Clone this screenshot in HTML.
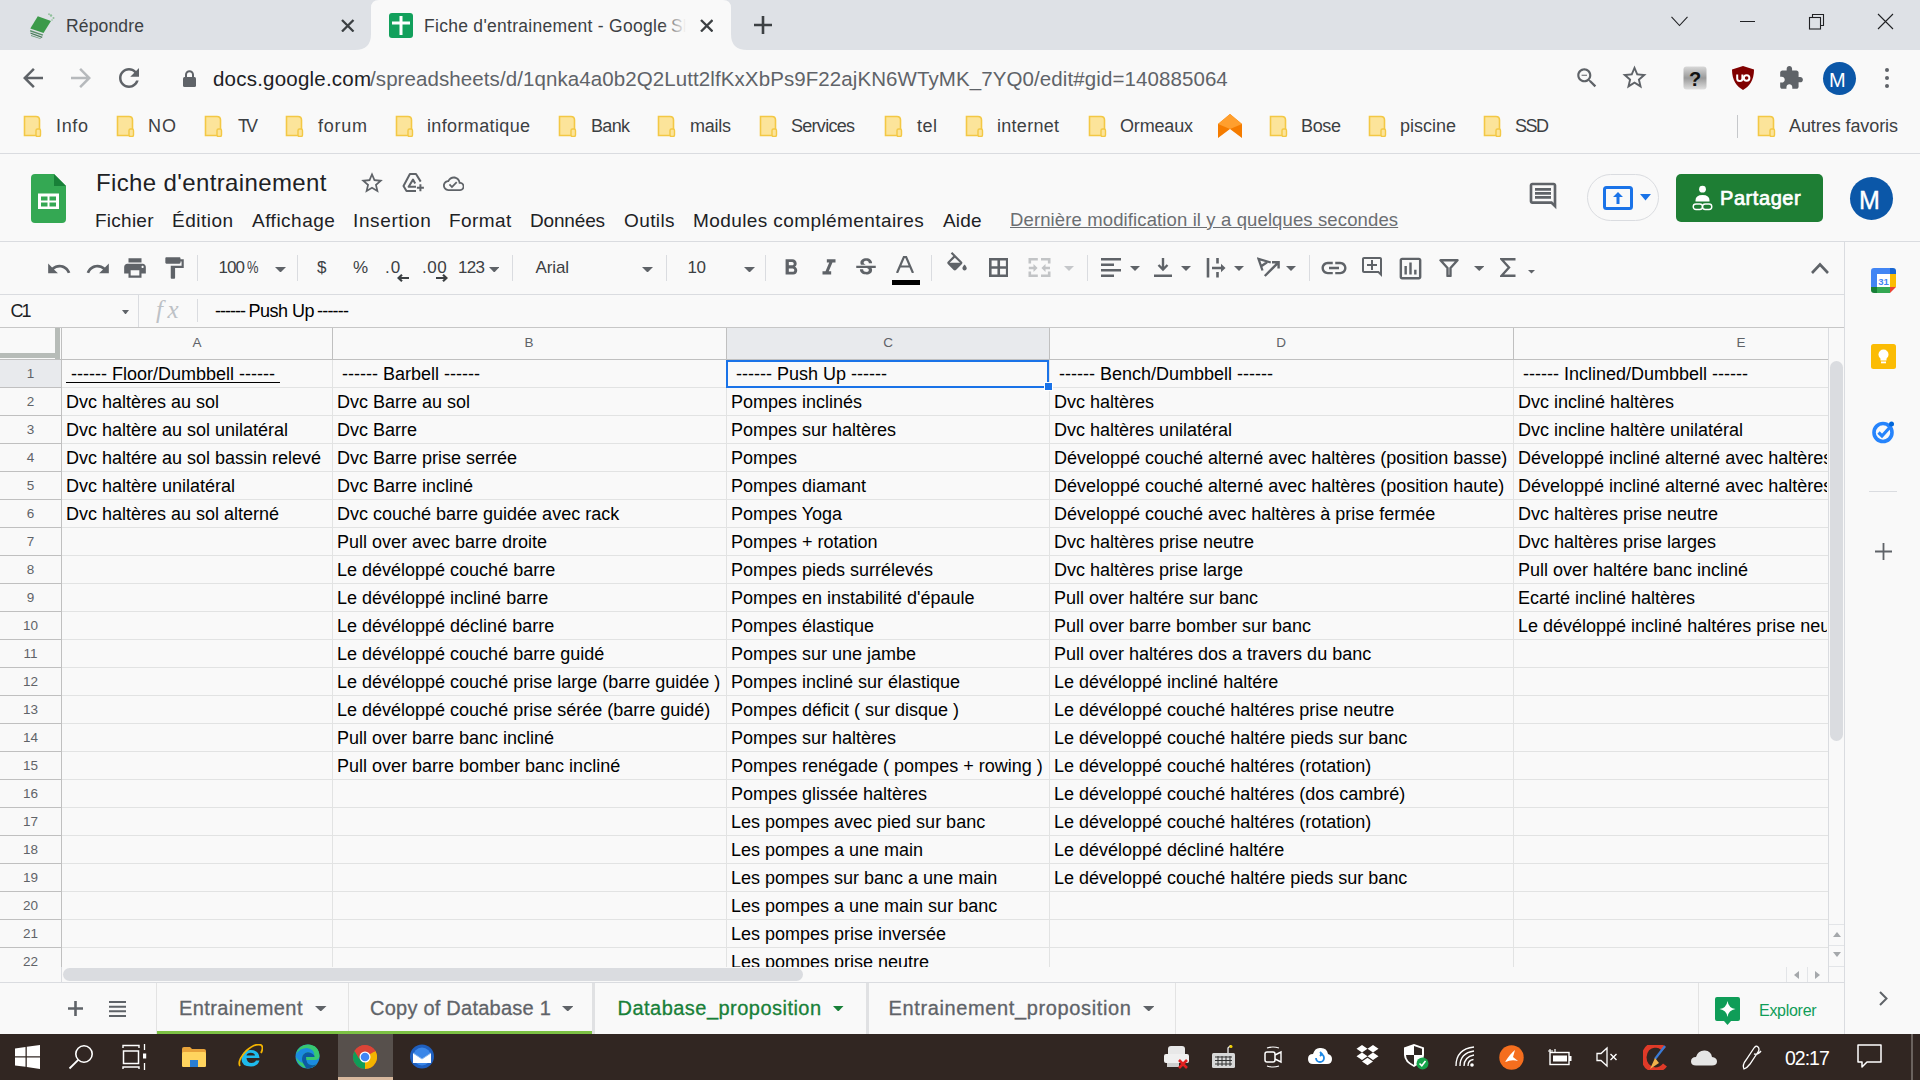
<!DOCTYPE html>
<html><head><meta charset="utf-8"><style>
html,body{margin:0;padding:0}
body{width:1920px;height:1080px;overflow:hidden;position:relative;background:#f9f9f9;font-family:'Liberation Sans',sans-serif}
.t{position:absolute;line-height:0;white-space:pre}
svg{display:block}
</style></head><body>
<div style="position:absolute;left:0px;top:0px;width:1920px;height:50px;background:#dee1e6"></div><svg style="position:absolute;left:355px;top:0" width="392" height="50" viewBox="0 0 392 50"><path d="M0 50 Q16 50 16 34 L16 8 Q16 0 24 0 L368 0 Q376 0 376 8 L376 34 Q376 50 392 50 Z" fill="#f9f9f9"/></svg><svg style="position:absolute;left:29px;top:13px;" width="26" height="26" viewBox="0 0 26 26"><path d="M8.8 3.3 L22 8 L14.5 20 L1.3 15.5 Z" fill="#3c9a4a"/><path d="M1.3 17 L14.2 21.5 L13.6 22.8 L1 18.4 Z" fill="#5c8f6c"/><path d="M1.5 19.5 L13.5 23.8 L13 25 L1.5 20.8 Z" fill="#4a7a5a"/><path d="M2 22 L12 25.5 L11.5 26 L2 23 Z" fill="#6a9a7a"/><circle cx="22" cy="2.5" r="1.2" fill="#8fbf9a"/><circle cx="24.5" cy="5" r="1" fill="#8fbf9a"/><circle cx="20" cy="1.2" r="0.9" fill="#8fbf9a"/><circle cx="23" cy="7" r="0.8" fill="#8fbf9a"/></svg><div class=t style="left:66.00px;top:25.94px;font-family:'Liberation Sans',sans-serif;font-size:17.5px;font-weight:400;color:#3c4043;letter-spacing:0.143px;">Répondre</div><svg style="position:absolute;left:341.25px;top:18.75px" width="13.5" height="13.5" viewBox="-6.75 -6.75 13.5 13.5"><path d="M-5.75 -5.75 L5.75 5.75 M5.75 -5.75 L-5.75 5.75" stroke="#3c4043" stroke-width="2.3" stroke-linecap="butt"/></svg><svg style="position:absolute;left:389px;top:13px;" width="24" height="25" viewBox="0 0 24 25"><rect x="0" y="0" width="24" height="25" rx="3" fill="#12a05c"/><rect x="3" y="8.5" width="18" height="3" fill="#fff"/><rect x="10.5" y="3" width="3" height="19" fill="#fff"/></svg><div class=t style="left:424.00px;top:25.94px;font-family:'Liberation Sans',sans-serif;font-size:17.5px;font-weight:400;color:#3c4043;letter-spacing:0.286px;">Fiche d'entrainement - Google</div><div class=t style="left:671.00px;top:25.94px;font-family:'Liberation Sans',sans-serif;font-size:17.5px;font-weight:400;color:#3c4043;letter-spacing:0px;">Sh</div><div style="position:absolute;left:662px;top:8px;width:36px;height:34px;background:linear-gradient(90deg,rgba(249,249,249,0),#f9f9f9 24px)"></div><svg style="position:absolute;left:699.75px;top:18.75px" width="13.5" height="13.5" viewBox="-6.75 -6.75 13.5 13.5"><path d="M-5.75 -5.75 L5.75 5.75 M5.75 -5.75 L-5.75 5.75" stroke="#3c4043" stroke-width="2.3" stroke-linecap="butt"/></svg><svg style="position:absolute;left:754px;top:16px;" width="18" height="18" viewBox="0 0 18 18"><path d="M9 0 V18 M0 9 H18" stroke="#3c4043" stroke-width="2.6"/></svg><svg style="position:absolute;left:1671px;top:16px;" width="17" height="11" viewBox="0 0 17 11"><path d="M0.5 0.8 L8.5 9.5 L16.5 0.8" stroke="#202124" stroke-width="1.1" fill="none"/></svg><div style="position:absolute;left:1740px;top:21px;width:15px;height:1.2px;background:#202124"></div><svg style="position:absolute;left:1807px;top:12px;" width="19" height="19" viewBox="0 0 19 19"><rect x="2.5" y="5.5" width="11" height="11.5" fill="none" stroke="#202124" stroke-width="1.1"/><path d="M5.5 5.5 V2.5 H16.5 V13.5 H13.5" fill="none" stroke="#202124" stroke-width="1.1"/></svg><svg style="position:absolute;left:1877px;top:13px;" width="17" height="17" viewBox="0 0 17 17"><path d="M1 1 L16 16 M16 1 L1 16" stroke="#202124" stroke-width="1.1"/></svg><svg style="position:absolute;left:18px;top:63px" width="30" height="30" viewBox="0 0 24 24"><path d="M20 11H7.83l5.59-5.59L12 4l-8 8 8 8 1.41-1.41L7.83 13H20v-2z" fill="#5f6368"/></svg><svg style="position:absolute;left:66px;top:63px" width="30" height="30" viewBox="0 0 24 24"><path d="M12 4l-1.41 1.41L16.17 11H4v2h12.17l-5.58 5.59L12 20l8-8z" fill="#b6b9bc"/></svg><svg style="position:absolute;left:114px;top:63px" width="30" height="30" viewBox="0 0 24 24"><path d="M17.65 6.35C16.2 4.9 14.21 4 12 4c-4.42 0-7.99 3.58-7.99 8s3.57 8 7.99 8c3.73 0 6.84-2.55 7.73-6h-2.08c-.82 2.33-3.04 4-5.65 4-3.31 0-6-2.69-6-6s2.69-6 6-6c1.66 0 3.14.69 4.22 1.78L13 11h7V4l-2.35 2.35z" fill="#5f6368"/></svg><svg style="position:absolute;left:183px;top:70px;" width="13" height="17" viewBox="0 0 13 17"><path d="M3 7 V4.8 A3.5 3.5 0 0 1 10 4.8 V7" stroke="#5f6368" stroke-width="2" fill="none"/><rect x="0" y="7" width="13" height="10" rx="1.5" fill="#5f6368"/></svg><div class=t style="left:213.00px;top:78.90px;font-family:'Liberation Sans',sans-serif;font-size:20.5px;font-weight:400;color:#202124;letter-spacing:0.214px;">docs.google.com</div><div class=t style="left:370.00px;top:78.90px;font-family:'Liberation Sans',sans-serif;font-size:20.5px;font-weight:400;color:#5f6368;letter-spacing:0.09px;">/spreadsheets/d/1qnka4a0b2Q2Lutt2lfKxXbPs9F22ajKN6WTyMK_7YQ0/edit#gid=140885064</div><svg style="position:absolute;left:1574px;top:65px" width="26" height="26" viewBox="0 0 24 24"><path d="M15.5 14h-.79l-.28-.27C15.41 12.59 16 11.11 16 9.5 16 5.91 13.09 3 9.5 3S3 5.91 3 9.5 5.91 16 9.5 16c1.61 0 3.09-.59 4.23-1.57l.27.28v.79l5 4.99L20.49 19l-4.99-5zm-6 0C7.01 14 5 11.99 5 9.5S7.01 5 9.5 5 14 7.01 14 9.5 11.99 14 9.5 14zM7 9h5v1H7z" fill="#5f6368"/></svg><svg style="position:absolute;left:1620px;top:63px" width="29" height="29" viewBox="0 0 24 24"><path d="M22 9.24l-7.19-.62L12 2 9.19 8.63 2 9.24l5.46 4.73L5.82 21 12 17.27 18.18 21l-1.63-7.03L22 9.24zM12 15.4l-3.76 2.27 1-4.28-3.32-2.88 4.38-.38L12 6.1l1.71 4.04 4.38.38-3.32 2.88 1 4.28L12 15.4z" fill="#5f6368"/></svg><svg style="position:absolute;left:1683px;top:66px;" width="24" height="24" viewBox="0 0 24 24"><defs><linearGradient id="qg" x1="0" y1="0" x2="0" y2="1"><stop offset="0" stop-color="#d8d8d8"/><stop offset="0.5" stop-color="#9a9a9a"/><stop offset="1" stop-color="#e0e0e0"/></linearGradient></defs><rect x="0.5" y="0.5" width="23" height="23" rx="3" fill="url(#qg)"/><text x="12" y="19.5" text-anchor="middle" font-family="Liberation Sans" font-weight="bold" font-size="20" fill="#111">?</text></svg><svg style="position:absolute;left:1732px;top:66px;" width="22" height="24" viewBox="0 0 22 24"><path d="M11 0 L22 3.5 C22 15 17 20.5 11 24 C5 20.5 0 15 0 3.5 Z" fill="#800000"/><path d="M5.2 8.5 V12.5 A2.6 2.6 0 0 0 10.4 12.5 V8.5" stroke="#fff" stroke-width="2" fill="none"/><circle cx="14.6" cy="12" r="2.8" stroke="#fff" stroke-width="2" fill="none"/></svg><svg style="position:absolute;left:1778px;top:65px" width="26" height="26" viewBox="0 0 24 24"><path d="M20.5 11H19V7c0-1.1-.9-2-2-2h-4V3.5C13 2.12 11.88 1 10.5 1S8 2.12 8 3.5V5H4c-1.1 0-1.99.9-1.99 2v3.8H3.5c1.49 0 2.7 1.21 2.7 2.7s-1.21 2.7-2.7 2.7H2V20c0 1.1.9 2 2 2h3.8v-1.5c0-1.49 1.21-2.7 2.7-2.7 1.49 0 2.7 1.21 2.7 2.7V22H17c1.1 0 2-.9 2-2v-4h1.5c1.38 0 2.5-1.12 2.5-2.5S21.88 11 20.5 11z" fill="#5f6368"/></svg><div style="position:absolute;left:1823px;top:62px;width:33px;height:33px;background:#0b57a8;border-radius:50%"></div><div class=t style="left:1829.00px;top:79.57px;font-family:'Liberation Sans',sans-serif;font-size:20px;font-weight:400;color:#ffffff;letter-spacing:0px;">M</div><div style="position:absolute;left:1885px;top:68px;width:4px;height:4px;background:#5f6368;border-radius:50%"></div><div style="position:absolute;left:1885px;top:76px;width:4px;height:4px;background:#5f6368;border-radius:50%"></div><div style="position:absolute;left:1885px;top:84px;width:4px;height:4px;background:#5f6368;border-radius:50%"></div><svg style="position:absolute;left:23px;top:115px;" width="19" height="22" viewBox="0 0 19 22"><path d="M1.5 1.5 H13 Q16.5 1.5 16.5 5 V20.5 H1.5 Z" fill="#fce49a" stroke="#f3c845" stroke-width="1.6"/><rect x="13" y="14" width="4.5" height="7.5" rx="1.5" fill="#fce49a" stroke="#f3c845" stroke-width="1.4"/></svg><div class=t style="left:56.00px;top:126.26px;font-family:'Liberation Sans',sans-serif;font-size:18px;font-weight:400;color:#3c4043;letter-spacing:0.667px;">Info</div><svg style="position:absolute;left:116px;top:115px;" width="19" height="22" viewBox="0 0 19 22"><path d="M1.5 1.5 H13 Q16.5 1.5 16.5 5 V20.5 H1.5 Z" fill="#fce49a" stroke="#f3c845" stroke-width="1.6"/><rect x="13" y="14" width="4.5" height="7.5" rx="1.5" fill="#fce49a" stroke="#f3c845" stroke-width="1.4"/></svg><div class=t style="left:148.00px;top:126.26px;font-family:'Liberation Sans',sans-serif;font-size:18px;font-weight:400;color:#3c4043;letter-spacing:1.0px;">NO</div><svg style="position:absolute;left:204px;top:115px;" width="19" height="22" viewBox="0 0 19 22"><path d="M1.5 1.5 H13 Q16.5 1.5 16.5 5 V20.5 H1.5 Z" fill="#fce49a" stroke="#f3c845" stroke-width="1.6"/><rect x="13" y="14" width="4.5" height="7.5" rx="1.5" fill="#fce49a" stroke="#f3c845" stroke-width="1.4"/></svg><div class=t style="left:238.00px;top:126.26px;font-family:'Liberation Sans',sans-serif;font-size:18px;font-weight:400;color:#3c4043;letter-spacing:-3.0px;">TV</div><svg style="position:absolute;left:285px;top:115px;" width="19" height="22" viewBox="0 0 19 22"><path d="M1.5 1.5 H13 Q16.5 1.5 16.5 5 V20.5 H1.5 Z" fill="#fce49a" stroke="#f3c845" stroke-width="1.6"/><rect x="13" y="14" width="4.5" height="7.5" rx="1.5" fill="#fce49a" stroke="#f3c845" stroke-width="1.4"/></svg><div class=t style="left:318.00px;top:126.26px;font-family:'Liberation Sans',sans-serif;font-size:18px;font-weight:400;color:#3c4043;letter-spacing:0.75px;">forum</div><svg style="position:absolute;left:395px;top:115px;" width="19" height="22" viewBox="0 0 19 22"><path d="M1.5 1.5 H13 Q16.5 1.5 16.5 5 V20.5 H1.5 Z" fill="#fce49a" stroke="#f3c845" stroke-width="1.6"/><rect x="13" y="14" width="4.5" height="7.5" rx="1.5" fill="#fce49a" stroke="#f3c845" stroke-width="1.4"/></svg><div class=t style="left:427.00px;top:126.26px;font-family:'Liberation Sans',sans-serif;font-size:18px;font-weight:400;color:#3c4043;letter-spacing:0.364px;">informatique</div><svg style="position:absolute;left:558px;top:115px;" width="19" height="22" viewBox="0 0 19 22"><path d="M1.5 1.5 H13 Q16.5 1.5 16.5 5 V20.5 H1.5 Z" fill="#fce49a" stroke="#f3c845" stroke-width="1.6"/><rect x="13" y="14" width="4.5" height="7.5" rx="1.5" fill="#fce49a" stroke="#f3c845" stroke-width="1.4"/></svg><div class=t style="left:591.00px;top:126.26px;font-family:'Liberation Sans',sans-serif;font-size:18px;font-weight:400;color:#3c4043;letter-spacing:-0.667px;">Bank</div><svg style="position:absolute;left:657px;top:115px;" width="19" height="22" viewBox="0 0 19 22"><path d="M1.5 1.5 H13 Q16.5 1.5 16.5 5 V20.5 H1.5 Z" fill="#fce49a" stroke="#f3c845" stroke-width="1.6"/><rect x="13" y="14" width="4.5" height="7.5" rx="1.5" fill="#fce49a" stroke="#f3c845" stroke-width="1.4"/></svg><div class=t style="left:690.00px;top:126.26px;font-family:'Liberation Sans',sans-serif;font-size:18px;font-weight:400;color:#3c4043;letter-spacing:-0.25px;">mails</div><svg style="position:absolute;left:759px;top:115px;" width="19" height="22" viewBox="0 0 19 22"><path d="M1.5 1.5 H13 Q16.5 1.5 16.5 5 V20.5 H1.5 Z" fill="#fce49a" stroke="#f3c845" stroke-width="1.6"/><rect x="13" y="14" width="4.5" height="7.5" rx="1.5" fill="#fce49a" stroke="#f3c845" stroke-width="1.4"/></svg><div class=t style="left:791.00px;top:126.26px;font-family:'Liberation Sans',sans-serif;font-size:18px;font-weight:400;color:#3c4043;letter-spacing:-0.714px;">Services</div><svg style="position:absolute;left:884px;top:115px;" width="19" height="22" viewBox="0 0 19 22"><path d="M1.5 1.5 H13 Q16.5 1.5 16.5 5 V20.5 H1.5 Z" fill="#fce49a" stroke="#f3c845" stroke-width="1.6"/><rect x="13" y="14" width="4.5" height="7.5" rx="1.5" fill="#fce49a" stroke="#f3c845" stroke-width="1.4"/></svg><div class=t style="left:917.00px;top:126.26px;font-family:'Liberation Sans',sans-serif;font-size:18px;font-weight:400;color:#3c4043;letter-spacing:0.5px;">tel</div><svg style="position:absolute;left:965px;top:115px;" width="19" height="22" viewBox="0 0 19 22"><path d="M1.5 1.5 H13 Q16.5 1.5 16.5 5 V20.5 H1.5 Z" fill="#fce49a" stroke="#f3c845" stroke-width="1.6"/><rect x="13" y="14" width="4.5" height="7.5" rx="1.5" fill="#fce49a" stroke="#f3c845" stroke-width="1.4"/></svg><div class=t style="left:997.00px;top:126.26px;font-family:'Liberation Sans',sans-serif;font-size:18px;font-weight:400;color:#3c4043;letter-spacing:0.286px;">internet</div><svg style="position:absolute;left:1088px;top:115px;" width="19" height="22" viewBox="0 0 19 22"><path d="M1.5 1.5 H13 Q16.5 1.5 16.5 5 V20.5 H1.5 Z" fill="#fce49a" stroke="#f3c845" stroke-width="1.6"/><rect x="13" y="14" width="4.5" height="7.5" rx="1.5" fill="#fce49a" stroke="#f3c845" stroke-width="1.4"/></svg><div class=t style="left:1120.00px;top:126.26px;font-family:'Liberation Sans',sans-serif;font-size:18px;font-weight:400;color:#3c4043;letter-spacing:-0.167px;">Ormeaux</div><svg style="position:absolute;left:1269px;top:115px;" width="19" height="22" viewBox="0 0 19 22"><path d="M1.5 1.5 H13 Q16.5 1.5 16.5 5 V20.5 H1.5 Z" fill="#fce49a" stroke="#f3c845" stroke-width="1.6"/><rect x="13" y="14" width="4.5" height="7.5" rx="1.5" fill="#fce49a" stroke="#f3c845" stroke-width="1.4"/></svg><div class=t style="left:1301.00px;top:126.26px;font-family:'Liberation Sans',sans-serif;font-size:18px;font-weight:400;color:#3c4043;letter-spacing:-0.333px;">Bose</div><svg style="position:absolute;left:1368px;top:115px;" width="19" height="22" viewBox="0 0 19 22"><path d="M1.5 1.5 H13 Q16.5 1.5 16.5 5 V20.5 H1.5 Z" fill="#fce49a" stroke="#f3c845" stroke-width="1.6"/><rect x="13" y="14" width="4.5" height="7.5" rx="1.5" fill="#fce49a" stroke="#f3c845" stroke-width="1.4"/></svg><div class=t style="left:1400.00px;top:126.26px;font-family:'Liberation Sans',sans-serif;font-size:18px;font-weight:400;color:#3c4043;letter-spacing:0.0px;">piscine</div><svg style="position:absolute;left:1483px;top:115px;" width="19" height="22" viewBox="0 0 19 22"><path d="M1.5 1.5 H13 Q16.5 1.5 16.5 5 V20.5 H1.5 Z" fill="#fce49a" stroke="#f3c845" stroke-width="1.6"/><rect x="13" y="14" width="4.5" height="7.5" rx="1.5" fill="#fce49a" stroke="#f3c845" stroke-width="1.4"/></svg><div class=t style="left:1515.00px;top:126.26px;font-family:'Liberation Sans',sans-serif;font-size:18px;font-weight:400;color:#3c4043;letter-spacing:-1.5px;">SSD</div><svg style="position:absolute;left:1757px;top:115px;" width="19" height="22" viewBox="0 0 19 22"><path d="M1.5 1.5 H13 Q16.5 1.5 16.5 5 V20.5 H1.5 Z" fill="#fce49a" stroke="#f3c845" stroke-width="1.6"/><rect x="13" y="14" width="4.5" height="7.5" rx="1.5" fill="#fce49a" stroke="#f3c845" stroke-width="1.4"/></svg><div class=t style="left:1789.00px;top:126.26px;font-family:'Liberation Sans',sans-serif;font-size:18px;font-weight:400;color:#3c4043;letter-spacing:-0.077px;">Autres favoris</div><svg style="position:absolute;left:1218px;top:114px;" width="24" height="24" viewBox="0 0 24 24"><path d="M12 0 L24 10 V24 L12 15 L0 24 V10 Z" fill="#f57c00"/><path d="M12 0 L24 10 L12 15 L0 10 Z" fill="#ff9f2e"/></svg><div style="position:absolute;left:1737px;top:115px;width:1px;height:23px;background:#c6c8cb"></div><div style="position:absolute;left:0px;top:153px;width:1920px;height:1px;background:#dadce0"></div><svg style="position:absolute;left:31px;top:174px;" width="35" height="49" viewBox="0 0 35 49"><path d="M4 0 H23 L35 12 V45 Q35 49 31 49 H4 Q0 49 0 45 V4 Q0 0 4 0 Z" fill="#34a853"/><path d="M23 0 L35 12 H23 Z" fill="#188038"/><rect x="7" y="19.5" width="21" height="15.5" fill="#fff"/><rect x="10" y="22.5" width="6.5" height="4" fill="#34a853"/><rect x="18.5" y="22.5" width="6.5" height="4" fill="#34a853"/><rect x="10" y="28.5" width="6.5" height="4" fill="#34a853"/><rect x="18.5" y="28.5" width="6.5" height="4" fill="#34a853"/></svg><div class=t style="left:96.00px;top:183.18px;font-family:'Liberation Sans',sans-serif;font-size:24px;font-weight:400;color:#202124;letter-spacing:0.368px;">Fiche d'entrainement</div><svg style="position:absolute;left:359px;top:170px" width="26" height="26" viewBox="0 0 24 24"><path d="M22 9.24l-7.19-.62L12 2 9.19 8.63 2 9.24l5.46 4.73L5.82 21 12 17.27 18.18 21l-1.63-7.03L22 9.24zM12 15.4l-3.76 2.27 1-4.28-3.32-2.88 4.38-.38L12 6.1l1.71 4.04 4.38.38-3.32 2.88 1 4.28L12 15.4z" fill="#5f6368"/></svg><svg style="position:absolute;left:400px;top:170px;" width="25" height="24" viewBox="0 0 25 24"><path d="M20.7 11.6 L16 4 H9.9 L3.5 16 L6.5 21 H16" fill="none" stroke="#5f6368" stroke-width="2" stroke-linejoin="round"/><path d="M16 16.7 H8.6 L13 9.6 L15.2 13.5" fill="none" stroke="#5f6368" stroke-width="2" stroke-linejoin="round"/><path d="M20.4 14.2 V21.2 M16.9 17.7 H23.9" stroke="#5f6368" stroke-width="2"/></svg><div style="position:absolute;left:442.5px;top:172.6px"><svg style="position:absolute;left:0px;top:0px" width="21.5" height="21.5" viewBox="0 0 24 24"><path d="M19.35 10.04C18.67 6.59 15.64 4 12 4 9.11 4 6.6 5.64 5.35 8.04 2.34 8.36 0 10.91 0 14c0 3.31 2.69 6 6 6h13c2.76 0 5-2.24 5-5 0-2.64-2.05-4.78-4.65-4.96zM19 18H6c-2.21 0-4-1.79-4-4 0-2.05 1.53-3.76 3.56-3.97l1.07-.11.5-.95C8.08 7.14 9.94 6 12 6c2.62 0 4.88 1.86 5.39 4.43l.3 1.5 1.53.11c1.56.1 2.78 1.41 2.78 2.96 0 1.65-1.35 3-3 3zm-9-3.82l-2.09-2.09L6.5 13.5 10 17l6.01-6.01-1.41-1.41z" fill="#5f6368"/></svg></div><div class=t style="left:95.00px;top:220.72px;font-family:'Liberation Sans',sans-serif;font-size:19px;font-weight:400;color:#202124;letter-spacing:0.25px;">Fichier</div><div class=t style="left:172.00px;top:220.72px;font-family:'Liberation Sans',sans-serif;font-size:19px;font-weight:400;color:#202124;letter-spacing:0.5px;">Édition</div><div class=t style="left:252.00px;top:220.72px;font-family:'Liberation Sans',sans-serif;font-size:19px;font-weight:400;color:#202124;letter-spacing:0.5px;">Affichage</div><div class=t style="left:353.00px;top:220.72px;font-family:'Liberation Sans',sans-serif;font-size:19px;font-weight:400;color:#202124;letter-spacing:0.625px;">Insertion</div><div class=t style="left:449.00px;top:220.72px;font-family:'Liberation Sans',sans-serif;font-size:19px;font-weight:400;color:#202124;letter-spacing:0.4px;">Format</div><div class=t style="left:530.00px;top:220.72px;font-family:'Liberation Sans',sans-serif;font-size:19px;font-weight:400;color:#202124;letter-spacing:-0.167px;">Données</div><div class=t style="left:624.00px;top:220.72px;font-family:'Liberation Sans',sans-serif;font-size:19px;font-weight:400;color:#202124;letter-spacing:0.4px;">Outils</div><div class=t style="left:693.00px;top:220.72px;font-family:'Liberation Sans',sans-serif;font-size:19px;font-weight:400;color:#202124;letter-spacing:0.409px;">Modules complémentaires</div><div class=t style="left:943.00px;top:220.72px;font-family:'Liberation Sans',sans-serif;font-size:19px;font-weight:400;color:#202124;letter-spacing:0.167px;">Aide</div><div class=t style="left:1010.00px;top:220.09px;font-family:'Liberation Sans',sans-serif;font-size:18.5px;font-weight:400;color:#6b6e72;letter-spacing:0.122px;text-decoration:underline;text-underline-offset:1px">Dernière modification il y a quelques secondes</div><svg style="position:absolute;left:1527px;top:180px" width="32" height="32" viewBox="0 0 24 24"><path d="M21.99 4c0-1.1-.89-2-1.99-2H4c-1.1 0-2 .9-2 2v12c0 1.1.9 2 2 2h14l4 4-.01-18zM20 4v13.17L18.83 16H4V4h16zM6 12h12v2H6zm0-3h12v2H6zm0-3h12v2H6z" fill="#5f6368"/></svg><div style="position:absolute;left:1587px;top:174px;width:72px;height:47px;border:1px solid #dadce0;border-radius:24px;box-sizing:border-box"></div><svg style="position:absolute;left:1603px;top:186px;" width="30" height="24" viewBox="0 0 30 24"><rect x="1.5" y="1.5" width="27" height="21" rx="2" fill="none" stroke="#1a73e8" stroke-width="3"/><path d="M15 6 L10 11 H13.5 V18 H16.5 V11 H20 Z" fill="#1a73e8"/></svg><svg style="position:absolute;left:1640px;top:194px;" width="11" height="7" viewBox="0 0 11 7"><path d="M0 0 H11 L5.5 6.5 Z" fill="#1a73e8"/></svg><div style="position:absolute;left:1676px;top:174px;width:147px;height:48px;background:#1e7e34;border-radius:5px"></div><svg style="position:absolute;left:1692px;top:185px;" width="21" height="26" viewBox="0 0 21 26"><circle cx="10.5" cy="4.2" r="3.4" fill="#fff"/><path d="M3.5 15.5 Q3.5 10 10.5 10 Q17.5 10 17.5 15.5 V16.5 H3.5 Z" fill="#fff"/><rect x="1.2" y="19" width="9.3" height="5.5" rx="2.75" fill="none" stroke="#fff" stroke-width="1.4"/><rect x="10.5" y="19" width="9.3" height="5.5" rx="2.75" fill="none" stroke="#fff" stroke-width="1.4"/></svg><div class=t style="left:1720.00px;top:198.07px;font-family:'Liberation Sans',sans-serif;font-size:20px;font-weight:400;color:#ffffff;letter-spacing:0.571px;-webkit-text-stroke:0.7px #fff">Partager</div><div style="position:absolute;left:1850px;top:177px;width:43px;height:43px;background:#0b57a8;border-radius:50%"></div><div class=t style="left:1859.00px;top:200.34px;font-family:'Liberation Sans',sans-serif;font-size:25px;font-weight:400;color:#ffffff;letter-spacing:0px;-webkit-text-stroke:0.4px #fff">M</div><div style="position:absolute;left:0px;top:241px;width:1920px;height:1px;background:#dadce0"></div><svg style="position:absolute;left:46px;top:256px" width="26" height="26" viewBox="0 0 24 24"><path d="M12.5 8c-2.65 0-5.05.99-6.9 2.6L2 7v9h9l-3.62-3.62c1.39-1.16 3.16-1.88 5.12-1.88 3.54 0 6.55 2.31 7.6 5.5l2.37-.78C21.08 11.03 17.15 8 12.5 8z" fill="#5f6368"/></svg><svg style="position:absolute;left:85px;top:256px" width="26" height="26" viewBox="0 0 24 24"><path d="M18.4 10.6C16.55 8.99 14.15 8 11.5 8c-4.65 0-8.58 3.03-9.96 7.22L3.9 16c1.05-3.19 4.05-5.5 7.6-5.5 1.95 0 3.73.72 5.12 1.88L13 16h9V7l-3.6 3.6z" fill="#5f6368"/></svg><svg style="position:absolute;left:122px;top:255px" width="26" height="26" viewBox="0 0 24 24"><path d="M19 8H5c-1.66 0-3 1.34-3 3v6h4v4h12v-4h4v-6c0-1.66-1.34-3-3-3zm-3 11H8v-5h8v5zm3-7c-.55 0-1-.45-1-1s.45-1 1-1 1 .45 1 1-.45 1-1 1zm-1-9H6v4h12V3z" fill="#5f6368"/></svg><svg style="position:absolute;left:161px;top:255px" width="26" height="26" viewBox="0 0 24 24"><path d="M18 4V3c0-.55-.45-1-1-1H5c-.55 0-1 .45-1 1v4c0 .55.45 1 1 1h12c.55 0 1-.45 1-1V6h1v4H9v11c0 .55.45 1 1 1h2c.55 0 1-.45 1-1v-9h8V4h-3z" fill="#5f6368"/></svg><div style="position:absolute;left:197px;top:255px;width:1px;height:26px;background:#dadce0"></div><div class=t style="left:218.50px;top:268.11px;font-family:'Liberation Sans',sans-serif;font-size:17px;font-weight:400;color:#3c4043;letter-spacing:-1.0px;">100</div><div class=t style="left:246.50px;top:268.11px;font-family:'Liberation Sans',sans-serif;font-size:17px;font-weight:400;color:#3c4043;letter-spacing:0px;transform:scaleX(0.76);transform-origin:0 0">%</div><svg style="position:absolute;left:275px;top:266.5px;" width="11" height="5.5" viewBox="0 0 11 5.5"><path d="M0 0 H11 L5.5 5.5 Z" fill="#5f6368"/></svg><div style="position:absolute;left:297px;top:255px;width:1px;height:26px;background:#dadce0"></div><div class=t style="left:317.00px;top:268.11px;font-family:'Liberation Sans',sans-serif;font-size:17px;font-weight:400;color:#3c4043;letter-spacing:0px;">$</div><div class=t style="left:353.00px;top:268.11px;font-family:'Liberation Sans',sans-serif;font-size:17px;font-weight:400;color:#3c4043;letter-spacing:0px;">%</div><div class=t style="left:385.00px;top:268.11px;font-family:'Liberation Sans',sans-serif;font-size:17px;font-weight:400;color:#3c4043;letter-spacing:1.0px;">.0</div><svg style="position:absolute;left:396.5px;top:274px;" width="12" height="8" viewBox="0 0 12 8"><path d="M12 4 H2 M5 0.8 L1.5 4 L5 7.2" stroke="#3c4043" stroke-width="2.2" fill="none"/></svg><div class=t style="left:422.00px;top:268.11px;font-family:'Liberation Sans',sans-serif;font-size:17px;font-weight:400;color:#3c4043;letter-spacing:0.5px;">.00</div><svg style="position:absolute;left:436px;top:274px;" width="12" height="8" viewBox="0 0 12 8"><path d="M0 4 H10 M7 0.8 L10.5 4 L7 7.2" stroke="#3c4043" stroke-width="2.2" fill="none"/></svg><div class=t style="left:458.00px;top:268.11px;font-family:'Liberation Sans',sans-serif;font-size:17px;font-weight:400;color:#3c4043;letter-spacing:-0.75px;">123</div><svg style="position:absolute;left:488.5px;top:266.5px;" width="10.5" height="5.5" viewBox="0 0 10.5 5.5"><path d="M0 0 H10.5 L5.25 5.5 Z" fill="#5f6368"/></svg><div style="position:absolute;left:512px;top:255px;width:1px;height:26px;background:#dadce0"></div><div class=t style="left:535.50px;top:268.11px;font-family:'Liberation Sans',sans-serif;font-size:17px;font-weight:400;color:#3c4043;letter-spacing:-0.125px;">Arial</div><svg style="position:absolute;left:642px;top:266.5px;" width="11" height="5.5" viewBox="0 0 11 5.5"><path d="M0 0 H11 L5.5 5.5 Z" fill="#5f6368"/></svg><div style="position:absolute;left:666px;top:255px;width:1px;height:26px;background:#dadce0"></div><div class=t style="left:687.50px;top:268.11px;font-family:'Liberation Sans',sans-serif;font-size:17px;font-weight:400;color:#3c4043;letter-spacing:-0.5px;">10</div><svg style="position:absolute;left:743.5px;top:266.5px;" width="11" height="5.5" viewBox="0 0 11 5.5"><path d="M0 0 H11 L5.5 5.5 Z" fill="#5f6368"/></svg><div style="position:absolute;left:765px;top:255px;width:1px;height:26px;background:#dadce0"></div><svg style="position:absolute;left:778px;top:255px" width="26" height="26" viewBox="0 0 24 24"><path d="M15.6 10.79c.97-.67 1.65-1.77 1.65-2.79 0-2.26-1.75-4-4-4H7v14h7.04c2.09 0 3.71-1.7 3.71-3.79 0-1.52-.86-2.82-2.15-3.42zM10 6.5h3c.83 0 1.5.67 1.5 1.5s-.67 1.5-1.5 1.5h-3v-3zm3.5 9H10v-3h3.5c.83 0 1.5.67 1.5 1.5s-.67 1.5-1.5 1.5z" fill="#5f6368"/></svg><svg style="position:absolute;left:816px;top:255px" width="26" height="26" viewBox="0 0 24 24"><path d="M10 4v3h2.21l-3.42 8H6v3h8v-3h-2.21l3.42-8H18V4z" fill="#5f6368"/></svg><svg style="position:absolute;left:853px;top:255px" width="26" height="26" viewBox="0 0 24 24"><path d="M7.24 8.75c-.26-.48-.39-1.03-.39-1.67 0-.61.13-1.16.4-1.67.26-.5.63-.93 1.11-1.29.48-.35 1.05-.63 1.7-.83.66-.19 1.39-.29 2.18-.29.81 0 1.54.11 2.21.34.66.22 1.23.54 1.69.94.47.4.83.88 1.08 1.43.25.55.38 1.15.38 1.81h-3.01c0-.31-.05-.59-.15-.85-.09-.27-.24-.49-.44-.68-.2-.19-.45-.33-.75-.44-.3-.1-.66-.16-1.06-.16-.39 0-.74.04-1.03.13-.29.09-.53.21-.72.36-.19.16-.34.34-.44.55-.1.21-.15.43-.15.66 0 .48.25.88.74 1.21.38.25.77.48 1.41.7H7.39c-.05-.08-.11-.17-.15-.25zM21 12v-2H3v2h9.62c.18.07.4.14.55.2.37.17.66.34.87.51.21.17.35.36.43.57.07.2.11.43.11.69 0 .23-.05.45-.14.66-.09.2-.23.38-.42.53-.19.15-.42.26-.71.35-.29.08-.63.13-1.01.13-.43 0-.83-.04-1.18-.13s-.66-.23-.91-.42c-.25-.19-.45-.44-.59-.75-.14-.31-.25-.76-.25-1.21H6.4c0 .55.08 1.13.24 1.58.16.45.37.85.65 1.21.28.35.6.66.98.92.37.26.78.48 1.22.65.44.17.9.3 1.38.39.48.08.96.13 1.44.13.8 0 1.53-.09 2.18-.28s1.21-.45 1.67-.79c.46-.34.82-.77 1.07-1.27s.38-1.07.38-1.71c0-.6-.1-1.14-.31-1.61-.05-.11-.11-.23-.17-.33H21z" fill="#5f6368"/></svg><svg style="position:absolute;left:896px;top:256px;" width="18" height="17" viewBox="0 0 18 17"><path d="M1 17 L8 0.8 H10 L17 17 M4.2 10.5 H13.8" stroke="#5f6368" stroke-width="2.2" fill="none"/></svg><div style="position:absolute;left:892px;top:279.5px;width:28px;height:5px;background:#000"></div><div style="position:absolute;left:931px;top:255px;width:1px;height:26px;background:#dadce0"></div><svg style="position:absolute;left:944px;top:252px" width="26" height="26" viewBox="0 0 24 24"><path d="M16.56 8.94L7.62 0 6.21 1.41l2.38 2.38-5.15 5.15c-.59.59-.59 1.54 0 2.12l5.5 5.5c.29.29.68.44 1.06.44s.77-.15 1.06-.44l5.5-5.5c.59-.58.59-1.53 0-2.12zM5.21 10L10 5.21 14.79 10H5.21zM19 11.5s-2 2.17-2 3.5c0 1.1.9 2 2 2s2-.9 2-2c0-1.33-2-3.5-2-3.5z" fill="#5f6368"/></svg><svg style="position:absolute;left:988.5px;top:258px;" width="19.5" height="19" viewBox="0 0 19.5 19"><path d="M1.3 1.3 H18.2 V17.7 H1.3 Z M9.75 1.3 V17.7 M1.3 9.5 H18.2" stroke="#5f6368" stroke-width="2.6" fill="none"/></svg><svg style="position:absolute;left:1028px;top:257px;" width="23" height="21" viewBox="0 0 23 21"><path d="M1.8 6.6 V2.3 H9.8 M13 2.3 H21.2 V6.6 M1.8 14.5 V18.7 H9.8 M13 18.7 H21.2 V14.5 M0.8 11 H6.5 M22 11 H16.5" stroke="#c2c4c6" stroke-width="2.6" fill="none"/><path d="M5.5 7 L9.6 11 L5.5 15 Z M17.5 7 L13.4 11 L17.5 15 Z" fill="#c2c4c6"/></svg><svg style="position:absolute;left:1064px;top:265.5px;" width="10" height="5" viewBox="0 0 10 5"><path d="M0 0 H10 L5.0 5 Z" fill="#c5c7ca"/></svg><div style="position:absolute;left:1087px;top:255px;width:1px;height:26px;background:#dadce0"></div><svg style="position:absolute;left:1101px;top:258px;" width="20" height="19" viewBox="0 0 20 19"><path d="M0 1.2 H20 M0 6.7 H13 M0 12.2 H20 M0 17.7 H13" stroke="#5f6368" stroke-width="2.4"/></svg><svg style="position:absolute;left:1129.5px;top:265.5px;" width="10" height="5" viewBox="0 0 10 5"><path d="M0 0 H10 L5.0 5 Z" fill="#5f6368"/></svg><svg style="position:absolute;left:1154px;top:258px;" width="18" height="19" viewBox="0 0 18 19"><path d="M9 0 V11 M4.5 7 L9 11.5 L13.5 7 M0 17.7 H18" stroke="#5f6368" stroke-width="2.4" fill="none"/></svg><svg style="position:absolute;left:1181px;top:265.5px;" width="10" height="5" viewBox="0 0 10 5"><path d="M0 0 H10 L5.0 5 Z" fill="#5f6368"/></svg><svg style="position:absolute;left:1206px;top:258px;" width="20" height="20" viewBox="0 0 20 20"><path d="M2 0 V19.5 M11.5 0 V5.5 M11.5 14 V19.5 M6 10 H17" stroke="#5f6368" stroke-width="2.6" fill="none"/><path d="M15 5.8 L19.5 10 L15 14.2 Z" fill="#5f6368"/></svg><svg style="position:absolute;left:1234px;top:265.5px;" width="10" height="5" viewBox="0 0 10 5"><path d="M0 0 H10 L5.0 5 Z" fill="#5f6368"/></svg><svg style="position:absolute;left:1257px;top:257px;" width="23" height="21" viewBox="0 0 23 21"><path d="M13.8 5.5 L1.5 1.8 L5.5 13.5 M3.5 9.8 L10 5.2" stroke="#5f6368" stroke-width="2.3" fill="none" stroke-linejoin="miter"/><path d="M7.8 19 L21 5.8 M15 5.2 H21.6 V11.5" stroke="#5f6368" stroke-width="2.4" fill="none"/></svg><svg style="position:absolute;left:1286px;top:265.5px;" width="10" height="5" viewBox="0 0 10 5"><path d="M0 0 H10 L5.0 5 Z" fill="#5f6368"/></svg><div style="position:absolute;left:1309px;top:255px;width:1px;height:26px;background:#dadce0"></div><svg style="position:absolute;left:1319px;top:253px" width="30" height="30" viewBox="0 0 24 24"><path d="M3.9 12c0-1.71 1.39-3.1 3.1-3.1h4V7H7c-2.76 0-5 2.24-5 5s2.24 5 5 5h4v-1.9H7c-1.71 0-3.1-1.39-3.1-3.1zM8 13h8v-2H8v2zm9-6h-4v1.9h4c1.71 0 3.1 1.39 3.1 3.1s-1.39 3.1-3.1 3.1h-4V17h4c2.76 0 5-2.24 5-5s-2.24-5-5-5z" fill="#5f6368"/></svg><svg style="position:absolute;left:1360px;top:255px" width="24" height="24" viewBox="0 0 24 24"><path d="M21.99 4c0-1.1-.89-2-1.99-2H4c-1.1 0-2 .9-2 2v12c0 1.1.9 2 2 2h14l4 4-.01-18zM20 4v13.17L18.83 16H4V4h16zM13 5h-2v4H7v2h4v4h2v-4h4V9h-4z" fill="#5f6368"/></svg><svg style="position:absolute;left:1395.5px;top:254px" width="29" height="29" viewBox="0 0 24 24"><path d="M19 3H5c-1.1 0-2 .9-2 2v14c0 1.1.9 2 2 2h14c1.1 0 2-.9 2-2V5c0-1.1-.9-2-2-2zm0 16H5V5h14v14zM7 10h2v7H7zm4-3h2v10h-2zm4 6h2v4h-2z" fill="#5f6368"/></svg><svg style="position:absolute;left:1439px;top:259px;" width="20" height="18" viewBox="0 0 20 18"><path d="M1.5 1.3 H18.5 L11.5 9 V17 H8.5 V9 Z" stroke="#5f6368" stroke-width="2.4" fill="none" stroke-linejoin="round"/></svg><svg style="position:absolute;left:1473.5px;top:265.5px;" width="10.5" height="5" viewBox="0 0 10.5 5"><path d="M0 0 H10.5 L5.25 5 Z" fill="#5f6368"/></svg><svg style="position:absolute;left:1500px;top:258px;" width="16" height="19" viewBox="0 0 16 19"><path d="M15.5 1.2 H1.5 L9 9.5 L1.5 17.8 H15.5" stroke="#5f6368" stroke-width="2.4" fill="none"/></svg><svg style="position:absolute;left:1528px;top:270px;" width="7" height="3.5" viewBox="0 0 7 3.5"><path d="M0 0 H7 L3.5 3.5 Z" fill="#5f6368"/></svg><svg style="position:absolute;left:1811px;top:262px;" width="18" height="12" viewBox="0 0 18 12"><path d="M1 11 L9 2.5 L17 11" stroke="#5f6368" stroke-width="2.6" fill="none"/></svg><div style="position:absolute;left:0px;top:294px;width:1844px;height:1px;background:#dadce0"></div><div class=t style="left:10.50px;top:310.76px;font-family:'Liberation Sans',sans-serif;font-size:18px;font-weight:400;color:#202124;letter-spacing:-2.0px;">C1</div><svg style="position:absolute;left:121.5px;top:309.5px;" width="7" height="4.5" viewBox="0 0 7 4.5"><path d="M0 0 H7 L3.5 4.5 Z" fill="#5f6368"/></svg><div style="position:absolute;left:138px;top:295px;width:1px;height:32px;background:#dadce0"></div><div class=t style="left:156.00px;top:309.56px;font-family:'Liberation Serif',serif;font-size:25px;font-weight:400;color:#bdc1c6;letter-spacing:4.5px;font-style:italic">fx</div><div style="position:absolute;left:197px;top:299px;width:1px;height:23px;background:#dadce0"></div><div class=t style="left:215.00px;top:310.76px;font-family:'Liberation Sans',sans-serif;font-size:18px;font-weight:400;color:#000000;letter-spacing:-1.0px;">------</div><div class=t style="left:248.50px;top:310.76px;font-family:'Liberation Sans',sans-serif;font-size:18px;font-weight:400;color:#000000;letter-spacing:-0.5px;">Push Up</div><div class=t style="left:317.00px;top:310.76px;font-family:'Liberation Sans',sans-serif;font-size:18px;font-weight:400;color:#000000;letter-spacing:-0.8px;">------</div><div style="position:absolute;left:0px;top:327px;width:1844px;height:1px;background:#c7c7c7"></div><div style="position:absolute;left:62px;top:328px;width:1766px;height:31px;background:#f9f9f9"></div><div style="position:absolute;left:727px;top:328px;width:322px;height:31px;background:#e8eaed"></div><div style="position:absolute;left:0px;top:359px;width:1828px;height:1px;background:#c0c0c0"></div><div style="position:absolute;left:0px;top:360px;width:61px;height:607px;background:#f9f9f9"></div><div style="position:absolute;left:0px;top:360px;width:61px;height:27px;background:#e8eaed"></div><div style="position:absolute;left:55px;top:328px;width:5px;height:31px;background:#b7bcb8"></div><div style="position:absolute;left:0px;top:353px;width:60px;height:5px;background:#b7bcb8"></div><div style="position:absolute;left:61px;top:328px;width:1px;height:639px;background:#c0c0c0"></div><div style="position:absolute;left:332px;top:328px;width:1px;height:31px;background:#c0c0c0"></div><div style="position:absolute;left:332px;top:360px;width:1px;height:607px;background:#e2e3e3"></div><div style="position:absolute;left:726px;top:328px;width:1px;height:31px;background:#c0c0c0"></div><div style="position:absolute;left:726px;top:360px;width:1px;height:607px;background:#e2e3e3"></div><div style="position:absolute;left:1049px;top:328px;width:1px;height:31px;background:#c0c0c0"></div><div style="position:absolute;left:1049px;top:360px;width:1px;height:607px;background:#e2e3e3"></div><div style="position:absolute;left:1513px;top:328px;width:1px;height:31px;background:#c0c0c0"></div><div style="position:absolute;left:1513px;top:360px;width:1px;height:607px;background:#e2e3e3"></div><div style="position:absolute;left:1828px;top:328px;width:1px;height:654px;background:#dadce0"></div><div style="position:absolute;left:0px;top:387px;width:61px;height:1px;background:#c0c0c0"></div><div style="position:absolute;left:62px;top:387px;width:1766px;height:1px;background:#e2e3e3"></div><div style="position:absolute;left:0px;top:415px;width:61px;height:1px;background:#c0c0c0"></div><div style="position:absolute;left:62px;top:415px;width:1766px;height:1px;background:#e2e3e3"></div><div style="position:absolute;left:0px;top:443px;width:61px;height:1px;background:#c0c0c0"></div><div style="position:absolute;left:62px;top:443px;width:1766px;height:1px;background:#e2e3e3"></div><div style="position:absolute;left:0px;top:471px;width:61px;height:1px;background:#c0c0c0"></div><div style="position:absolute;left:62px;top:471px;width:1766px;height:1px;background:#e2e3e3"></div><div style="position:absolute;left:0px;top:499px;width:61px;height:1px;background:#c0c0c0"></div><div style="position:absolute;left:62px;top:499px;width:1766px;height:1px;background:#e2e3e3"></div><div style="position:absolute;left:0px;top:527px;width:61px;height:1px;background:#c0c0c0"></div><div style="position:absolute;left:62px;top:527px;width:1766px;height:1px;background:#e2e3e3"></div><div style="position:absolute;left:0px;top:555px;width:61px;height:1px;background:#c0c0c0"></div><div style="position:absolute;left:62px;top:555px;width:1766px;height:1px;background:#e2e3e3"></div><div style="position:absolute;left:0px;top:583px;width:61px;height:1px;background:#c0c0c0"></div><div style="position:absolute;left:62px;top:583px;width:1766px;height:1px;background:#e2e3e3"></div><div style="position:absolute;left:0px;top:611px;width:61px;height:1px;background:#c0c0c0"></div><div style="position:absolute;left:62px;top:611px;width:1766px;height:1px;background:#e2e3e3"></div><div style="position:absolute;left:0px;top:639px;width:61px;height:1px;background:#c0c0c0"></div><div style="position:absolute;left:62px;top:639px;width:1766px;height:1px;background:#e2e3e3"></div><div style="position:absolute;left:0px;top:667px;width:61px;height:1px;background:#c0c0c0"></div><div style="position:absolute;left:62px;top:667px;width:1766px;height:1px;background:#e2e3e3"></div><div style="position:absolute;left:0px;top:695px;width:61px;height:1px;background:#c0c0c0"></div><div style="position:absolute;left:62px;top:695px;width:1766px;height:1px;background:#e2e3e3"></div><div style="position:absolute;left:0px;top:723px;width:61px;height:1px;background:#c0c0c0"></div><div style="position:absolute;left:62px;top:723px;width:1766px;height:1px;background:#e2e3e3"></div><div style="position:absolute;left:0px;top:751px;width:61px;height:1px;background:#c0c0c0"></div><div style="position:absolute;left:62px;top:751px;width:1766px;height:1px;background:#e2e3e3"></div><div style="position:absolute;left:0px;top:779px;width:61px;height:1px;background:#c0c0c0"></div><div style="position:absolute;left:62px;top:779px;width:1766px;height:1px;background:#e2e3e3"></div><div style="position:absolute;left:0px;top:807px;width:61px;height:1px;background:#c0c0c0"></div><div style="position:absolute;left:62px;top:807px;width:1766px;height:1px;background:#e2e3e3"></div><div style="position:absolute;left:0px;top:835px;width:61px;height:1px;background:#c0c0c0"></div><div style="position:absolute;left:62px;top:835px;width:1766px;height:1px;background:#e2e3e3"></div><div style="position:absolute;left:0px;top:863px;width:61px;height:1px;background:#c0c0c0"></div><div style="position:absolute;left:62px;top:863px;width:1766px;height:1px;background:#e2e3e3"></div><div style="position:absolute;left:0px;top:891px;width:61px;height:1px;background:#c0c0c0"></div><div style="position:absolute;left:62px;top:891px;width:1766px;height:1px;background:#e2e3e3"></div><div style="position:absolute;left:0px;top:919px;width:61px;height:1px;background:#c0c0c0"></div><div style="position:absolute;left:62px;top:919px;width:1766px;height:1px;background:#e2e3e3"></div><div style="position:absolute;left:0px;top:947px;width:61px;height:1px;background:#c0c0c0"></div><div style="position:absolute;left:62px;top:947px;width:1766px;height:1px;background:#e2e3e3"></div><div style="position:absolute;left:61px;width:271px;top:0"></div><div style="position:absolute;left:332px;width:394px;top:0"></div><div style="position:absolute;left:726px;width:323px;top:0"></div><div style="position:absolute;left:1049px;width:464px;top:0"></div><div style="position:absolute;left:1513px;width:0px;top:0"></div><div class=t style="left:177px;width:40px;text-align:center;top:343.32px;font-size:13.5px;color:#5f6368">A</div><div class=t style="left:509px;width:40px;text-align:center;top:343.32px;font-size:13.5px;color:#5f6368">B</div><div class=t style="left:868px;width:40px;text-align:center;top:343.32px;font-size:13.5px;color:#5f6368">C</div><div class=t style="left:1261px;width:40px;text-align:center;top:343.32px;font-size:13.5px;color:#5f6368">D</div><div class=t style="left:1721px;width:40px;text-align:center;top:343.32px;font-size:13.5px;color:#5f6368">E</div><div class=t style="left:0;width:61px;text-align:center;top:373.82px;font-size:13.5px;color:#5f6368">1</div><div class=t style="left:0;width:61px;text-align:center;top:401.82px;font-size:13.5px;color:#5f6368">2</div><div class=t style="left:0;width:61px;text-align:center;top:429.82px;font-size:13.5px;color:#5f6368">3</div><div class=t style="left:0;width:61px;text-align:center;top:457.82px;font-size:13.5px;color:#5f6368">4</div><div class=t style="left:0;width:61px;text-align:center;top:485.82px;font-size:13.5px;color:#5f6368">5</div><div class=t style="left:0;width:61px;text-align:center;top:513.82px;font-size:13.5px;color:#5f6368">6</div><div class=t style="left:0;width:61px;text-align:center;top:541.82px;font-size:13.5px;color:#5f6368">7</div><div class=t style="left:0;width:61px;text-align:center;top:569.82px;font-size:13.5px;color:#5f6368">8</div><div class=t style="left:0;width:61px;text-align:center;top:597.82px;font-size:13.5px;color:#5f6368">9</div><div class=t style="left:0;width:61px;text-align:center;top:625.82px;font-size:13.5px;color:#5f6368">10</div><div class=t style="left:0;width:61px;text-align:center;top:653.82px;font-size:13.5px;color:#5f6368">11</div><div class=t style="left:0;width:61px;text-align:center;top:681.82px;font-size:13.5px;color:#5f6368">12</div><div class=t style="left:0;width:61px;text-align:center;top:709.82px;font-size:13.5px;color:#5f6368">13</div><div class=t style="left:0;width:61px;text-align:center;top:737.82px;font-size:13.5px;color:#5f6368">14</div><div class=t style="left:0;width:61px;text-align:center;top:765.82px;font-size:13.5px;color:#5f6368">15</div><div class=t style="left:0;width:61px;text-align:center;top:793.82px;font-size:13.5px;color:#5f6368">16</div><div class=t style="left:0;width:61px;text-align:center;top:821.82px;font-size:13.5px;color:#5f6368">17</div><div class=t style="left:0;width:61px;text-align:center;top:849.82px;font-size:13.5px;color:#5f6368">18</div><div class=t style="left:0;width:61px;text-align:center;top:877.82px;font-size:13.5px;color:#5f6368">19</div><div class=t style="left:0;width:61px;text-align:center;top:905.82px;font-size:13.5px;color:#5f6368">20</div><div class=t style="left:0;width:61px;text-align:center;top:933.82px;font-size:13.5px;color:#5f6368">21</div><div class=t style="left:0;width:61px;text-align:center;top:961.82px;font-size:13.5px;color:#5f6368">22</div><div style="position:absolute;left:62px;top:360px;width:1766px;height:607px;overflow:hidden"><div style="position:absolute;left:0px;top:0px;width:269px;height:28px;overflow:hidden;white-space:pre;font-size:18px;line-height:28px;color:#000;padding-left:4px;box-sizing:border-box;text-decoration:underline;text-underline-offset:2px;"> ------ Floor/Dumbbell ------ </div><div style="position:absolute;left:0px;top:28px;width:269px;height:28px;overflow:hidden;white-space:pre;font-size:18px;line-height:28px;color:#000;padding-left:4px;box-sizing:border-box;">Dvc haltères au sol</div><div style="position:absolute;left:0px;top:56px;width:269px;height:28px;overflow:hidden;white-space:pre;font-size:18px;line-height:28px;color:#000;padding-left:4px;box-sizing:border-box;">Dvc haltère au sol unilatéral</div><div style="position:absolute;left:0px;top:84px;width:269px;height:28px;overflow:hidden;white-space:pre;font-size:18px;line-height:28px;color:#000;padding-left:4px;box-sizing:border-box;">Dvc haltére au sol bassin relevé</div><div style="position:absolute;left:0px;top:112px;width:269px;height:28px;overflow:hidden;white-space:pre;font-size:18px;line-height:28px;color:#000;padding-left:4px;box-sizing:border-box;">Dvc haltère unilatéral</div><div style="position:absolute;left:0px;top:140px;width:269px;height:28px;overflow:hidden;white-space:pre;font-size:18px;line-height:28px;color:#000;padding-left:4px;box-sizing:border-box;">Dvc haltères au sol alterné</div><div style="position:absolute;left:271px;top:0px;width:392px;height:28px;overflow:hidden;white-space:pre;font-size:18px;line-height:28px;color:#000;padding-left:4px;box-sizing:border-box;"> ------ Barbell ------</div><div style="position:absolute;left:271px;top:28px;width:392px;height:28px;overflow:hidden;white-space:pre;font-size:18px;line-height:28px;color:#000;padding-left:4px;box-sizing:border-box;">Dvc Barre au sol</div><div style="position:absolute;left:271px;top:56px;width:392px;height:28px;overflow:hidden;white-space:pre;font-size:18px;line-height:28px;color:#000;padding-left:4px;box-sizing:border-box;">Dvc Barre</div><div style="position:absolute;left:271px;top:84px;width:392px;height:28px;overflow:hidden;white-space:pre;font-size:18px;line-height:28px;color:#000;padding-left:4px;box-sizing:border-box;">Dvc Barre prise serrée</div><div style="position:absolute;left:271px;top:112px;width:392px;height:28px;overflow:hidden;white-space:pre;font-size:18px;line-height:28px;color:#000;padding-left:4px;box-sizing:border-box;">Dvc Barre incliné</div><div style="position:absolute;left:271px;top:140px;width:392px;height:28px;overflow:hidden;white-space:pre;font-size:18px;line-height:28px;color:#000;padding-left:4px;box-sizing:border-box;">Dvc couché barre guidée avec rack</div><div style="position:absolute;left:271px;top:168px;width:392px;height:28px;overflow:hidden;white-space:pre;font-size:18px;line-height:28px;color:#000;padding-left:4px;box-sizing:border-box;">Pull over avec barre droite</div><div style="position:absolute;left:271px;top:196px;width:392px;height:28px;overflow:hidden;white-space:pre;font-size:18px;line-height:28px;color:#000;padding-left:4px;box-sizing:border-box;">Le dévéloppé couché barre</div><div style="position:absolute;left:271px;top:224px;width:392px;height:28px;overflow:hidden;white-space:pre;font-size:18px;line-height:28px;color:#000;padding-left:4px;box-sizing:border-box;">Le dévéloppé incliné barre</div><div style="position:absolute;left:271px;top:252px;width:392px;height:28px;overflow:hidden;white-space:pre;font-size:18px;line-height:28px;color:#000;padding-left:4px;box-sizing:border-box;">Le dévéloppé décliné barre</div><div style="position:absolute;left:271px;top:280px;width:392px;height:28px;overflow:hidden;white-space:pre;font-size:18px;line-height:28px;color:#000;padding-left:4px;box-sizing:border-box;">Le dévéloppé couché barre guidé</div><div style="position:absolute;left:271px;top:308px;width:392px;height:28px;overflow:hidden;white-space:pre;font-size:18px;line-height:28px;color:#000;padding-left:4px;box-sizing:border-box;">Le dévéloppé couché prise large (barre guidée )</div><div style="position:absolute;left:271px;top:336px;width:392px;height:28px;overflow:hidden;white-space:pre;font-size:18px;line-height:28px;color:#000;padding-left:4px;box-sizing:border-box;">Le dévéloppé couché prise sérée (barre guidé)</div><div style="position:absolute;left:271px;top:364px;width:392px;height:28px;overflow:hidden;white-space:pre;font-size:18px;line-height:28px;color:#000;padding-left:4px;box-sizing:border-box;">Pull over barre banc incliné</div><div style="position:absolute;left:271px;top:392px;width:392px;height:28px;overflow:hidden;white-space:pre;font-size:18px;line-height:28px;color:#000;padding-left:4px;box-sizing:border-box;">Pull over barre bomber banc incliné</div><div style="position:absolute;left:665px;top:0px;width:321px;height:28px;overflow:hidden;white-space:pre;font-size:18px;line-height:28px;color:#000;padding-left:4px;box-sizing:border-box;"> ------ Push Up ------</div><div style="position:absolute;left:665px;top:28px;width:321px;height:28px;overflow:hidden;white-space:pre;font-size:18px;line-height:28px;color:#000;padding-left:4px;box-sizing:border-box;">Pompes inclinés</div><div style="position:absolute;left:665px;top:56px;width:321px;height:28px;overflow:hidden;white-space:pre;font-size:18px;line-height:28px;color:#000;padding-left:4px;box-sizing:border-box;">Pompes sur haltères</div><div style="position:absolute;left:665px;top:84px;width:321px;height:28px;overflow:hidden;white-space:pre;font-size:18px;line-height:28px;color:#000;padding-left:4px;box-sizing:border-box;">Pompes</div><div style="position:absolute;left:665px;top:112px;width:321px;height:28px;overflow:hidden;white-space:pre;font-size:18px;line-height:28px;color:#000;padding-left:4px;box-sizing:border-box;">Pompes diamant</div><div style="position:absolute;left:665px;top:140px;width:321px;height:28px;overflow:hidden;white-space:pre;font-size:18px;line-height:28px;color:#000;padding-left:4px;box-sizing:border-box;">Pompes Yoga</div><div style="position:absolute;left:665px;top:168px;width:321px;height:28px;overflow:hidden;white-space:pre;font-size:18px;line-height:28px;color:#000;padding-left:4px;box-sizing:border-box;">Pompes + rotation</div><div style="position:absolute;left:665px;top:196px;width:321px;height:28px;overflow:hidden;white-space:pre;font-size:18px;line-height:28px;color:#000;padding-left:4px;box-sizing:border-box;">Pompes pieds surrélevés</div><div style="position:absolute;left:665px;top:224px;width:321px;height:28px;overflow:hidden;white-space:pre;font-size:18px;line-height:28px;color:#000;padding-left:4px;box-sizing:border-box;">Pompes en instabilité d'épaule</div><div style="position:absolute;left:665px;top:252px;width:321px;height:28px;overflow:hidden;white-space:pre;font-size:18px;line-height:28px;color:#000;padding-left:4px;box-sizing:border-box;">Pompes élastique</div><div style="position:absolute;left:665px;top:280px;width:321px;height:28px;overflow:hidden;white-space:pre;font-size:18px;line-height:28px;color:#000;padding-left:4px;box-sizing:border-box;">Pompes sur une jambe</div><div style="position:absolute;left:665px;top:308px;width:321px;height:28px;overflow:hidden;white-space:pre;font-size:18px;line-height:28px;color:#000;padding-left:4px;box-sizing:border-box;">Pompes incliné sur élastique</div><div style="position:absolute;left:665px;top:336px;width:321px;height:28px;overflow:hidden;white-space:pre;font-size:18px;line-height:28px;color:#000;padding-left:4px;box-sizing:border-box;">Pompes déficit ( sur disque )</div><div style="position:absolute;left:665px;top:364px;width:321px;height:28px;overflow:hidden;white-space:pre;font-size:18px;line-height:28px;color:#000;padding-left:4px;box-sizing:border-box;">Pompes sur haltères</div><div style="position:absolute;left:665px;top:392px;width:321px;height:28px;overflow:hidden;white-space:pre;font-size:18px;line-height:28px;color:#000;padding-left:4px;box-sizing:border-box;">Pompes renégade ( pompes + rowing )</div><div style="position:absolute;left:665px;top:420px;width:321px;height:28px;overflow:hidden;white-space:pre;font-size:18px;line-height:28px;color:#000;padding-left:4px;box-sizing:border-box;">Pompes glissée haltères</div><div style="position:absolute;left:665px;top:448px;width:321px;height:28px;overflow:hidden;white-space:pre;font-size:18px;line-height:28px;color:#000;padding-left:4px;box-sizing:border-box;">Les pompes avec pied sur banc</div><div style="position:absolute;left:665px;top:476px;width:321px;height:28px;overflow:hidden;white-space:pre;font-size:18px;line-height:28px;color:#000;padding-left:4px;box-sizing:border-box;">Les pompes a une main</div><div style="position:absolute;left:665px;top:504px;width:321px;height:28px;overflow:hidden;white-space:pre;font-size:18px;line-height:28px;color:#000;padding-left:4px;box-sizing:border-box;">Les pompes sur banc a une main</div><div style="position:absolute;left:665px;top:532px;width:321px;height:28px;overflow:hidden;white-space:pre;font-size:18px;line-height:28px;color:#000;padding-left:4px;box-sizing:border-box;">Les pompes a une main sur banc</div><div style="position:absolute;left:665px;top:560px;width:321px;height:28px;overflow:hidden;white-space:pre;font-size:18px;line-height:28px;color:#000;padding-left:4px;box-sizing:border-box;">Les pompes prise inversée</div><div style="position:absolute;left:665px;top:588px;width:321px;height:28px;overflow:hidden;white-space:pre;font-size:18px;line-height:28px;color:#000;padding-left:4px;box-sizing:border-box;">Les pompes prise neutre</div><div style="position:absolute;left:988px;top:0px;width:462px;height:28px;overflow:hidden;white-space:pre;font-size:18px;line-height:28px;color:#000;padding-left:4px;box-sizing:border-box;"> ------ Bench/Dumbbell ------</div><div style="position:absolute;left:988px;top:28px;width:462px;height:28px;overflow:hidden;white-space:pre;font-size:18px;line-height:28px;color:#000;padding-left:4px;box-sizing:border-box;">Dvc haltères</div><div style="position:absolute;left:988px;top:56px;width:462px;height:28px;overflow:hidden;white-space:pre;font-size:18px;line-height:28px;color:#000;padding-left:4px;box-sizing:border-box;">Dvc haltères unilatéral</div><div style="position:absolute;left:988px;top:84px;width:462px;height:28px;overflow:hidden;white-space:pre;font-size:18px;line-height:28px;color:#000;padding-left:4px;box-sizing:border-box;">Développé couché alterné avec haltères (position basse)</div><div style="position:absolute;left:988px;top:112px;width:462px;height:28px;overflow:hidden;white-space:pre;font-size:18px;line-height:28px;color:#000;padding-left:4px;box-sizing:border-box;">Développé couché alterné avec haltères (position haute)</div><div style="position:absolute;left:988px;top:140px;width:462px;height:28px;overflow:hidden;white-space:pre;font-size:18px;line-height:28px;color:#000;padding-left:4px;box-sizing:border-box;">Développé couché avec haltères à prise fermée</div><div style="position:absolute;left:988px;top:168px;width:462px;height:28px;overflow:hidden;white-space:pre;font-size:18px;line-height:28px;color:#000;padding-left:4px;box-sizing:border-box;">Dvc haltères prise neutre</div><div style="position:absolute;left:988px;top:196px;width:462px;height:28px;overflow:hidden;white-space:pre;font-size:18px;line-height:28px;color:#000;padding-left:4px;box-sizing:border-box;">Dvc haltères prise large</div><div style="position:absolute;left:988px;top:224px;width:462px;height:28px;overflow:hidden;white-space:pre;font-size:18px;line-height:28px;color:#000;padding-left:4px;box-sizing:border-box;">Pull over haltére sur banc</div><div style="position:absolute;left:988px;top:252px;width:462px;height:28px;overflow:hidden;white-space:pre;font-size:18px;line-height:28px;color:#000;padding-left:4px;box-sizing:border-box;">Pull over barre bomber sur banc</div><div style="position:absolute;left:988px;top:280px;width:462px;height:28px;overflow:hidden;white-space:pre;font-size:18px;line-height:28px;color:#000;padding-left:4px;box-sizing:border-box;">Pull over haltéres dos a travers du banc</div><div style="position:absolute;left:988px;top:308px;width:462px;height:28px;overflow:hidden;white-space:pre;font-size:18px;line-height:28px;color:#000;padding-left:4px;box-sizing:border-box;">Le dévéloppé incliné haltére</div><div style="position:absolute;left:988px;top:336px;width:462px;height:28px;overflow:hidden;white-space:pre;font-size:18px;line-height:28px;color:#000;padding-left:4px;box-sizing:border-box;">Le dévéloppé couché haltéres prise neutre</div><div style="position:absolute;left:988px;top:364px;width:462px;height:28px;overflow:hidden;white-space:pre;font-size:18px;line-height:28px;color:#000;padding-left:4px;box-sizing:border-box;">Le développé couché haltére pieds sur banc</div><div style="position:absolute;left:988px;top:392px;width:462px;height:28px;overflow:hidden;white-space:pre;font-size:18px;line-height:28px;color:#000;padding-left:4px;box-sizing:border-box;">Le développé couché haltéres (rotation)</div><div style="position:absolute;left:988px;top:420px;width:462px;height:28px;overflow:hidden;white-space:pre;font-size:18px;line-height:28px;color:#000;padding-left:4px;box-sizing:border-box;">Le développé couché haltéres (dos cambré)</div><div style="position:absolute;left:988px;top:448px;width:462px;height:28px;overflow:hidden;white-space:pre;font-size:18px;line-height:28px;color:#000;padding-left:4px;box-sizing:border-box;">Le développé couché haltéres (rotation)</div><div style="position:absolute;left:988px;top:476px;width:462px;height:28px;overflow:hidden;white-space:pre;font-size:18px;line-height:28px;color:#000;padding-left:4px;box-sizing:border-box;">Le dévéloppé décliné haltére</div><div style="position:absolute;left:988px;top:504px;width:462px;height:28px;overflow:hidden;white-space:pre;font-size:18px;line-height:28px;color:#000;padding-left:4px;box-sizing:border-box;">Le développé couché haltére pieds sur banc</div><div style="position:absolute;left:1452px;top:0px;width:313px;height:28px;overflow:hidden;white-space:pre;font-size:18px;line-height:28px;color:#000;padding-left:4px;box-sizing:border-box;"> ------ Inclined/Dumbbell ------</div><div style="position:absolute;left:1452px;top:28px;width:313px;height:28px;overflow:hidden;white-space:pre;font-size:18px;line-height:28px;color:#000;padding-left:4px;box-sizing:border-box;">Dvc incliné haltères</div><div style="position:absolute;left:1452px;top:56px;width:313px;height:28px;overflow:hidden;white-space:pre;font-size:18px;line-height:28px;color:#000;padding-left:4px;box-sizing:border-box;">Dvc incline haltère unilatéral</div><div style="position:absolute;left:1452px;top:84px;width:313px;height:28px;overflow:hidden;white-space:pre;font-size:18px;line-height:28px;color:#000;padding-left:4px;box-sizing:border-box;">Développé incliné alterné avec haltères (position basse)</div><div style="position:absolute;left:1452px;top:112px;width:313px;height:28px;overflow:hidden;white-space:pre;font-size:18px;line-height:28px;color:#000;padding-left:4px;box-sizing:border-box;">Développé incliné alterné avec haltères (position haute)</div><div style="position:absolute;left:1452px;top:140px;width:313px;height:28px;overflow:hidden;white-space:pre;font-size:18px;line-height:28px;color:#000;padding-left:4px;box-sizing:border-box;">Dvc haltères prise neutre</div><div style="position:absolute;left:1452px;top:168px;width:313px;height:28px;overflow:hidden;white-space:pre;font-size:18px;line-height:28px;color:#000;padding-left:4px;box-sizing:border-box;">Dvc haltères prise larges</div><div style="position:absolute;left:1452px;top:196px;width:313px;height:28px;overflow:hidden;white-space:pre;font-size:18px;line-height:28px;color:#000;padding-left:4px;box-sizing:border-box;">Pull over haltére banc incliné</div><div style="position:absolute;left:1452px;top:224px;width:313px;height:28px;overflow:hidden;white-space:pre;font-size:18px;line-height:28px;color:#000;padding-left:4px;box-sizing:border-box;">Ecarté incliné haltères</div><div style="position:absolute;left:1452px;top:252px;width:313px;height:28px;overflow:hidden;white-space:pre;font-size:18px;line-height:28px;color:#000;padding-left:4px;box-sizing:border-box;">Le dévéloppé incliné haltéres prise neutre</div></div><div style="position:absolute;left:726px;top:360px;width:323px;height:28px;border:2px solid #1a73e8;box-sizing:border-box"></div><div style="position:absolute;left:1044px;top:382px;width:9px;height:9px;background:#1a73e8;border:1px solid #fff;box-sizing:border-box"></div><div style="position:absolute;left:1830px;top:361px;width:13px;height:380px;background:#dadce0;border-radius:7px"></div><div style="position:absolute;left:1829px;top:924px;width:15px;height:1px;background:#e3e5e8"></div><div style="position:absolute;left:1829px;top:945px;width:15px;height:1px;background:#e3e5e8"></div><div style="position:absolute;left:1829px;top:966px;width:15px;height:1px;background:#e3e5e8"></div><svg style="position:absolute;left:1832.5px;top:952px;" width="8" height="5" viewBox="0 0 8 5"><path d="M0 0 H8 L4 5 Z" fill="#a5a8ab"/></svg><svg style="position:absolute;left:1832.5px;top:932px" width="8" height="5" viewBox="0 0 8 5"><path d="M0 5 H8 L4 0 Z" fill="#a5a8ab"/></svg><div style="position:absolute;left:62px;top:967px;width:1766px;height:15px;background:#f9f9f9"></div><div style="position:absolute;left:63px;top:968px;width:740px;height:13px;background:#dadce0;border-radius:7px"></div><div style="position:absolute;left:1786px;top:967px;width:1px;height:15px;background:#e3e5e8"></div><div style="position:absolute;left:1807px;top:967px;width:1px;height:15px;background:#e3e5e8"></div><svg style="position:absolute;left:1794px;top:971px;" width="5" height="8" viewBox="0 0 5 8"><path d="M5 0 V8 L0 4 Z" fill="#a5a8ab"/></svg><svg style="position:absolute;left:1815px;top:971px;" width="5" height="8" viewBox="0 0 5 8"><path d="M0 0 V8 L5 4 Z" fill="#a5a8ab"/></svg><div style="position:absolute;left:0px;top:982px;width:1844px;height:1px;background:#dadce0"></div><div style="position:absolute;left:0px;top:967px;width:61px;height:15px;background:#f9f9f9"></div><div style="position:absolute;left:61px;top:967px;width:1px;height:15px;background:#dadce0"></div><div style="position:absolute;left:1844px;top:242px;width:1px;height:792px;background:#dadce0"></div><svg style="position:absolute;left:1871px;top:268px;" width="25" height="25" viewBox="0 0 25 25"><path d="M19 0 H3 Q0 0 0 3 V19 H6 V6 H19 Z" fill="#4285f4"/><path d="M19 0 H22 Q25 0 25 3 V6 H19 Z" fill="#1967d2"/><rect x="19" y="6" width="6" height="13" fill="#fbbc04"/><path d="M0 19 H6 V25 H3 Q0 25 0 22 Z" fill="#188038"/><rect x="6" y="19" width="13" height="6" fill="#34a853"/><path d="M19 19 H25 L19 25 Z" fill="#ea4335"/><rect x="6" y="6" width="13" height="13" fill="#fff"/><text x="12.5" y="16.5" text-anchor="middle" font-family="Liberation Sans" font-size="9.5" font-weight="bold" fill="#4285f4">31</text></svg><svg style="position:absolute;left:1871px;top:344px;" width="25" height="25" viewBox="0 0 25 25"><rect x="0" y="0" width="25" height="25" rx="2.5" fill="#fbbc04"/><circle cx="12.5" cy="10.5" r="5" fill="#fff"/><rect x="9.5" y="13" width="6" height="3.5" fill="#fff"/><rect x="10" y="17.5" width="5" height="1.8" fill="#fff"/></svg><svg style="position:absolute;left:1872px;top:420px;" width="24" height="24" viewBox="0 0 24 24"><circle cx="11" cy="12.5" r="9" fill="none" stroke="#2684fc" stroke-width="3.6"/><path d="M6.5 12.5 L10 16 L19 6" stroke="#2684fc" stroke-width="3.2" fill="none"/><circle cx="19.5" cy="4" r="2.5" fill="#0066da"/></svg><div style="position:absolute;left:1869px;top:491px;width:28px;height:1px;background:#dadce0"></div><svg style="position:absolute;left:1875px;top:543px;" width="17" height="17" viewBox="0 0 17 17"><path d="M8.5 0 V17 M0 8.5 H17" stroke="#5f6368" stroke-width="1.8"/></svg><svg style="position:absolute;left:1879px;top:991px;" width="9" height="15" viewBox="0 0 9 15"><path d="M1 1 L7.5 7.5 L1 14" stroke="#5f6368" stroke-width="2" fill="none"/></svg><svg style="position:absolute;left:68px;top:1001px;" width="15" height="15" viewBox="0 0 15 15"><path d="M7.5 0 V15 M0 7.5 H15" stroke="#5f6368" stroke-width="2.6"/></svg><svg style="position:absolute;left:109px;top:1001px;" width="17" height="16" viewBox="0 0 17 16"><path d="M0 1 H17 M0 5.7 H17 M0 10.3 H17 M0 15 H17" stroke="#5f6368" stroke-width="2"/></svg><div style="position:absolute;left:156px;top:983px;width:1px;height:51px;background:#e3e3e3"></div><div class=t style="left:179.00px;top:1008.07px;font-family:'Liberation Sans',sans-serif;font-size:20px;font-weight:400;color:#5f6368;letter-spacing:0.409px;-webkit-text-stroke:0.3px currentColor">Entrainement</div><svg style="position:absolute;left:315px;top:1005.5px;" width="11.5" height="5.5" viewBox="0 0 11.5 5.5"><path d="M0 0 H11.5 L5.75 5.5 Z" fill="#5f6368"/></svg><div style="position:absolute;left:348px;top:983px;width:1px;height:51px;background:#e3e3e3"></div><div class=t style="left:370.00px;top:1008.07px;font-family:'Liberation Sans',sans-serif;font-size:20px;font-weight:400;color:#5f6368;letter-spacing:0.235px;-webkit-text-stroke:0.3px currentColor">Copy of Database 1</div><svg style="position:absolute;left:561.5px;top:1005.5px;" width="11.5" height="5.5" viewBox="0 0 11.5 5.5"><path d="M0 0 H11.5 L5.75 5.5 Z" fill="#5f6368"/></svg><div style="position:absolute;left:157px;top:1031px;width:438px;height:3px;background:#7cc144"></div><div style="position:absolute;left:592px;top:983px;width:3px;height:51px;background:#e0e1e3"></div><div style="position:absolute;left:866px;top:983px;width:3px;height:51px;background:#e0e1e3"></div><div class=t style="left:617.50px;top:1008.07px;font-family:'Liberation Sans',sans-serif;font-size:20px;font-weight:400;color:#188038;letter-spacing:0.474px;-webkit-text-stroke:0.3px currentColor">Database_proposition</div><svg style="position:absolute;left:833px;top:1005.5px;" width="10.5" height="5.5" viewBox="0 0 10.5 5.5"><path d="M0 0 H10.5 L5.25 5.5 Z" fill="#188038"/></svg><div class=t style="left:888.50px;top:1008.07px;font-family:'Liberation Sans',sans-serif;font-size:20px;font-weight:400;color:#5f6368;letter-spacing:0.63px;-webkit-text-stroke:0.3px currentColor">Entrainement_proposition</div><svg style="position:absolute;left:1142.5px;top:1005.5px;" width="11.5" height="5.5" viewBox="0 0 11.5 5.5"><path d="M0 0 H11.5 L5.75 5.5 Z" fill="#5f6368"/></svg><div style="position:absolute;left:1175px;top:983px;width:1px;height:51px;background:#e3e3e3"></div><div style="position:absolute;left:1698px;top:983px;width:1px;height:51px;background:#e3e3e3"></div><svg style="position:absolute;left:1715px;top:997px;" width="25" height="28" viewBox="0 0 25 28"><path d="M2 0 H23 Q25 0 25 2 V22 Q25 24 23 24 H16 L12.5 28 L9 24 H2 Q0 24 0 22 V2 Q0 0 2 0 Z" fill="#0f9d58"/><path d="M12.5 4 Q13.5 11 20.5 12 Q13.5 13 12.5 20 Q11.5 13 4.5 12 Q11.5 11 12.5 4 Z" fill="#fff"/></svg><div class=t style="left:1759.00px;top:1011.46px;font-family:'Liberation Sans',sans-serif;font-size:16px;font-weight:400;color:#0f9d58;letter-spacing:-0.286px;">Explorer</div><div style="position:absolute;left:0px;top:1034px;width:1920px;height:46px;background:#312622"></div><svg style="position:absolute;left:15px;top:1045px;" width="25" height="24" viewBox="0 0 25 24"><path d="M0 3.5 L10.5 2 V11.2 H0 Z M11.8 1.8 L25 0 V11.2 H11.8 Z M0 12.5 H10.5 V21.8 L0 20.4 Z M11.8 12.5 H25 V24 L11.8 22.1 Z" fill="#fff"/></svg><svg style="position:absolute;left:68px;top:1044px;" width="26" height="26" viewBox="0 0 26 26"><circle cx="16" cy="10" r="8.2" fill="none" stroke="#fff" stroke-width="1.6"/><path d="M10.2 15.8 L1.5 24.5" stroke="#fff" stroke-width="1.8"/></svg><svg style="position:absolute;left:122px;top:1044px;" width="26" height="26" viewBox="0 0 26 26"><path d="M1 4 V1.5 H17 V4 M1 25 V23 H17 V25" stroke="#fff" stroke-width="1.4" fill="none"/><rect x="1.5" y="7" width="15" height="12.5" fill="none" stroke="#fff" stroke-width="1.5"/><path d="M22.5 0 V6 M22.5 19 V26" stroke="#fff" stroke-width="1.3"/><rect x="21" y="9.5" width="3.2" height="5" fill="#fff"/></svg><svg style="position:absolute;left:182px;top:1047px;" width="24" height="20" viewBox="0 0 24 20"><path d="M0 2 Q0 0 2 0 H8 L10 2 H22 Q24 2 24 4 V18 Q24 20 22 20 H2 Q0 20 0 18 Z" fill="#e8a33a"/><rect x="0" y="5" width="24" height="15" rx="1.5" fill="#ffd45e"/><rect x="8" y="13" width="8" height="7" fill="#2a7ed2"/></svg><svg style="position:absolute;left:238px;top:1044px;" width="25" height="25" viewBox="0 0 25 25"><path d="M3.5 15 Q3.5 6 12.5 6 Q21 6 21.5 14 H8.5 Q9 19 13.5 19 Q16.5 19 18 16.5 H21.5 Q19.5 22.5 13 22.5 Q3.5 22.5 3.5 15 Z M8.5 11.5 H17 Q16.5 8.8 12.7 8.8 Q9 8.8 8.5 11.5 Z" fill="#1ebbee"/><path d="M2 22 Q-1 17 8 7 Q17 -1 23 1 Q26 3 23 9" stroke="#f4b400" stroke-width="1.8" fill="none"/></svg><svg style="position:absolute;left:295px;top:1044px;" width="25" height="25" viewBox="0 0 25 25"><circle cx="12.5" cy="12.5" r="12" fill="#1b8be0"/><path d="M1 10 Q3 1 13 0.5 Q24 1 24.5 12 Q24 16 20 16 H11 Q11 20 16 21 Q20 21.5 22 20 Q18 25 11 24 Q2 22 1 13 Q4 18 8 19 Q6 15 8 11 Q11 7 16 9 Q20 11 19.5 13 Q20 5 12 4 Q5 4 1 10 Z" fill="#37c871"/><path d="M8 19 Q6 15 8 11 Q11 7 16 9 Q20 11 19.5 13 H11 Q11 20 16 21 Q20 21.5 22 20 Q18 25 11 24 Z" fill="#0c59a4"/></svg><div style="position:absolute;left:338px;top:1034px;width:55px;height:46px;background:#57504c"></div><div style="position:absolute;left:338px;top:1077px;width:55px;height:3px;background:#d8b99e"></div><svg style="position:absolute;left:353px;top:1045px;" width="24" height="24" viewBox="0 0 24 24"><circle cx="12" cy="12" r="12" fill="#db4437"/><path d="M12 12 L1.6 6 A12 12 0 0 0 12 24 Z" fill="#0f9d58"/><path d="M12 12 L12 24 A12 12 0 0 0 22.4 6 Z" fill="#f4b400"/><path d="M12 6.5 H22.4 A12 12 0 0 0 1.6 6 L6.5 14.5 A6 6 0 0 1 12 6.5" fill="#db4437"/><circle cx="12" cy="12" r="5.5" fill="#fff"/><circle cx="12" cy="12" r="4.3" fill="#4285f4"/></svg><svg style="position:absolute;left:410px;top:1044px;" width="24" height="25" viewBox="0 0 24 25"><circle cx="12" cy="12.5" r="12" fill="#1f5fbf"/><circle cx="12" cy="12.5" r="9" fill="#3a86e8"/><path d="M3 9 L12 15 L21 9 V19 H3 Z" fill="#fff"/><path d="M3 9 L12 15 L21 9" stroke="#8bb8f0" stroke-width="1" fill="none"/></svg><svg style="position:absolute;left:1164px;top:1046px;" width="25" height="23" viewBox="0 0 25 23"><rect x="4" y="0" width="17" height="11" rx="3" fill="#e8e8e8"/><rect x="0" y="8" width="25" height="9" rx="2" fill="#f0f0f0"/><rect x="3" y="17" width="12" height="4" fill="#cfcfcf"/><path d="M15 14 L23 22 M23 14 L15 22" stroke="#e02020" stroke-width="2.6"/></svg><svg style="position:absolute;left:1212px;top:1045px;" width="23" height="24" viewBox="0 0 23 24"><rect x="0" y="8" width="23" height="15" rx="1.5" fill="#d8d8d8"/><path d="M3 12 H20 M3 15.5 H20 M3 19 H20 M6 11 V21 M10 11 V21 M14 11 V21 M18 11 V21" stroke="#333" stroke-width="1"/><path d="M16 8 V3 L19 0" stroke="#eee" stroke-width="1.3" fill="none"/><circle cx="19" cy="1.5" r="1.5" fill="#f0d000"/></svg><svg style="position:absolute;left:1264px;top:1046px;" width="18" height="22" viewBox="0 0 18 22"><rect x="1" y="6" width="10" height="10" rx="2" fill="none" stroke="#fff" stroke-width="1.5"/><path d="M11 9 L17 6 V16 L11 13" stroke="#fff" stroke-width="1.4" fill="none"/><path d="M3 2 Q9 0 15 2 M3 20 Q9 22 15 20" stroke="#fff" stroke-width="1.2" fill="none"/></svg><svg style="position:absolute;left:1308px;top:1047px;" width="24" height="18" viewBox="0 0 24 18"><path d="M5 17 Q0 17 0 12 Q0 7 5 7 Q7 0 13 1 Q19 1 20 7 Q24 8 24 12 Q24 17 19 17 Z" fill="#fff"/><path d="M8 11 A4 4 0 1 0 12 7 M12 5 L14 7 L12 9" stroke="#1e88e5" stroke-width="1.8" fill="none"/></svg><svg style="position:absolute;left:1356px;top:1045px;" width="23" height="22" viewBox="0 0 23 22"><path d="M6 0 L11.5 3.8 L6 7.5 L0.5 3.8 Z M17 0 L22.5 3.8 L17 7.5 L11.5 3.8 Z M6 7.5 L11.5 11.3 L6 15 L0.5 11.3 Z M17 7.5 L22.5 11.3 L17 15 L11.5 11.3 Z M6 16.5 L11.5 12.8 L17 16.5 L11.5 20.3 Z" fill="#fff"/></svg><svg style="position:absolute;left:1404px;top:1044px;" width="25" height="26" viewBox="0 0 25 26"><path d="M10 0 L20 3.5 V11 Q20 18 10 23 Q0 18 0 11 V3.5 Z" fill="#fff"/><path d="M10 2 V21 Q2 17 2 11 H10 V2 Z" fill="#2e2522" opacity="0.0"/><path d="M10 2 L18 4.8 V11 H10 Z M2 11 H10 V21 Q2 17 2 11 Z" fill="#2e2522"/><circle cx="18.5" cy="19.5" r="6" fill="#16a34a"/><path d="M15.5 19.5 L17.8 21.8 L21.5 17" stroke="#fff" stroke-width="1.6" fill="none"/></svg><svg style="position:absolute;left:1455px;top:1046px;" width="20" height="21" viewBox="0 0 20 21"><path d="M1 20 Q1 3 19 1 M5 20 Q5 7 19 5 M9 20 Q9 11 19 9 M13 20 Q13 14 18.5 13.5" stroke="#fff" stroke-width="1.3" fill="none"/><circle cx="17" cy="19" r="1.8" fill="#fff"/></svg><svg style="position:absolute;left:1499px;top:1045px;" width="25" height="25" viewBox="0 0 25 25"><circle cx="12.5" cy="12.5" r="12.2" fill="#f56e1e"/><path d="M6 17 Q11 9 16 5 L14 12 L19 16 Q13 14 6 17 Z" fill="#fff"/></svg><svg style="position:absolute;left:1547px;top:1049px;" width="25" height="17" viewBox="0 0 25 17"><rect x="3" y="3.5" width="19" height="12" fill="none" stroke="#fff" stroke-width="1.4"/><rect x="22" y="7" width="2.5" height="5" fill="#fff"/><rect x="6" y="6.5" width="14" height="6" fill="#fff"/><path d="M1 2 H6 M3 0 V3 M8 0 V3" stroke="#fff" stroke-width="1.2"/></svg><svg style="position:absolute;left:1596px;top:1046px;" width="22" height="22" viewBox="0 0 22 22"><path d="M1 7.5 H5 L11 2 V20 L5 14.5 H1 Z" fill="none" stroke="#fff" stroke-width="1.3"/><path d="M14.5 8 L20.5 14 M20.5 8 L14.5 14" stroke="#fff" stroke-width="1.4"/></svg><svg style="position:absolute;left:1643px;top:1045px;" width="26" height="25" viewBox="0 0 26 25"><path d="M21 4 Q17 0 12 0 Q2 1 1 12 Q1 23 12 25 Q18 25 22 20" stroke="#e03a28" stroke-width="5" fill="none"/><path d="M22 1 L12 14" stroke="#3a7bd5" stroke-width="2.2"/><path d="M12 13 L7 24 L16 18 Z" fill="#f2b24a"/></svg><svg style="position:absolute;left:1691px;top:1049px;" width="26" height="17" viewBox="0 0 26 17"><path d="M5 16.5 Q0 16.5 0 12.5 Q0 8 5 8 Q7 1 14 1.5 Q20 2 21 8 Q26 8.5 26 12.5 Q26 16.5 21 16.5 Z" fill="#e5e5e5"/></svg><svg style="position:absolute;left:1741px;top:1045px;" width="21" height="25" viewBox="0 0 21 25"><path d="M3 24 Q1 20 5 15 L13 3 Q15 0 17 2 Q19 4 17 7 L9 19 Q6 23 3 24 Z M13 9 Q17 10 20 6" stroke="#fff" stroke-width="1.3" fill="none"/></svg><div class=t style="left:1785.00px;top:1057.74px;font-family:'Liberation Sans',sans-serif;font-size:19.5px;font-weight:400;color:#ffffff;letter-spacing:-1.0px;">02:17</div><svg style="position:absolute;left:1857px;top:1044px;" width="25" height="25" viewBox="0 0 25 25"><path d="M1 1 H24 V18 H10 L5 23 V18 H1 Z" fill="none" stroke="#fff" stroke-width="1.5" stroke-linejoin="round"/></svg><div style="position:absolute;left:1911px;top:1034px;width:2px;height:46px;background:#6a625e"></div>
</body></html>
